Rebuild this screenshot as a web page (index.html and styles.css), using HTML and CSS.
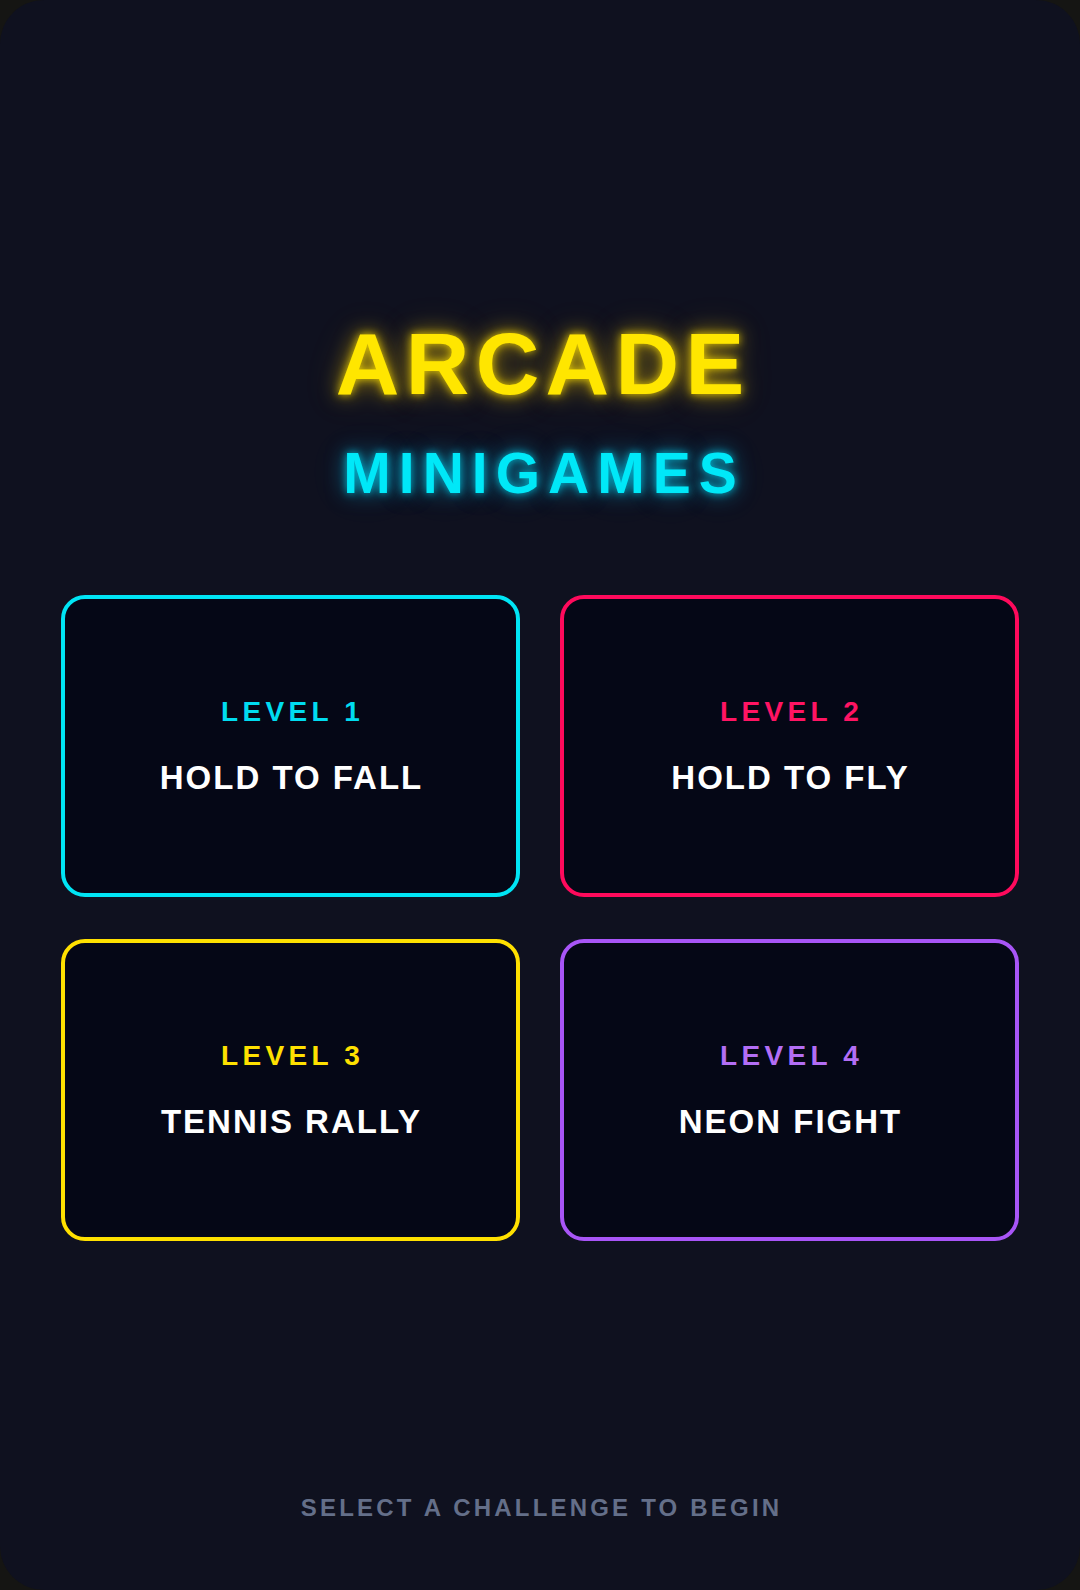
FILE: index.html
```html
<!DOCTYPE html>
<html lang="en">
<head>
<meta charset="utf-8">
<title>Arcade Minigames</title>
<link rel="stylesheet" href="styles.css">
</head>
<body>
  <main class="screen">
    <header class="brand">
      <h1 class="brand-title">ARCADE</h1>
      <h2 class="brand-sub">MINIGAMES</h2>
    </header>
    <section class="levels">
      <button class="level level-cyan">
        <span class="level-num">LEVEL 1</span>
        <span class="level-name">HOLD TO FALL</span>
      </button>
      <button class="level level-pink">
        <span class="level-num">LEVEL 2</span>
        <span class="level-name">HOLD TO FLY</span>
      </button>
      <button class="level level-yellow">
        <span class="level-num">LEVEL 3</span>
        <span class="level-name">TENNIS RALLY</span>
      </button>
      <button class="level level-purple">
        <span class="level-num">LEVEL 4</span>
        <span class="level-name">NEON FIGHT</span>
      </button>
    </section>
    <p class="hint">SELECT A CHALLENGE TO BEGIN</p>
  </main>
</body>
</html>
```
FILE: styles.css
```css
* { box-sizing: border-box; }

html, body {
  margin: 0;
  padding: 0;
  background: #151513;
}

body {
  font-family: "Liberation Sans", Arial, sans-serif;
}

.screen {
  width: 1080px;
  height: 1590px;
  background: #0f111f;
  border-radius: 44px;
  display: flex;
  flex-direction: column;
  align-items: stretch;
  padding: 320px 61px 70px;
}

.brand {
  display: flex;
  flex-direction: column;
  align-items: center;
}

.brand-title {
  margin: 0;
  font-size: 88px;
  line-height: 1;
  font-weight: 700;
  letter-spacing: 6.4px;
  margin-right: -6.4px;
  color: #ffe600;
  text-shadow: 0 0 8px rgba(255, 226, 0, 0.8), 0 0 20px rgba(255, 210, 0, 0.55), 0 0 36px rgba(255, 200, 0, 0.25);
}

.brand-sub {
  margin: 37px 0 0;
  font-size: 57px;
  line-height: 1;
  font-weight: 700;
  letter-spacing: 8px;
  margin-right: -8px;
  color: #00e8f8;
  text-shadow: 0 0 8px rgba(0, 230, 255, 0.75), 0 0 20px rgba(0, 200, 255, 0.5), 0 0 36px rgba(0, 190, 255, 0.2);
}

.levels {
  margin-top: 93px;
  display: grid;
  grid-template-columns: 1fr 1fr;
  grid-auto-rows: 302px;
  column-gap: 40px;
  row-gap: 42px;
}

.level {
  font-family: inherit;
  background: #050716;
  border: 4px solid;
  border-radius: 24px;
  display: flex;
  flex-direction: column;
  align-items: center;
  justify-content: center;
  padding: 0;
  cursor: pointer;
}

.level-num {
  font-size: 28px;
  line-height: 1;
  font-weight: 700;
  letter-spacing: 4.3px;
  margin-right: -4.3px;
}

.level-name {
  margin-top: 35px;
  font-size: 33px;
  line-height: 1;
  font-weight: 700;
  letter-spacing: 2px;
  margin-right: -2px;
  color: #ffffff;
}

.level-cyan { border-color: #00e5f5; }
.level-cyan .level-num { color: #00dcf0; }

.level-pink { border-color: #ff0a5c; }
.level-pink .level-num { color: #ff1463; }

.level-yellow { border-color: #ffe000; }
.level-yellow .level-num { color: #ffe000; }

.level-purple { border-color: #a855f7; }
.level-purple .level-num { color: #b36ef5; }

.hint {
  margin: auto 0 0;
  text-align: center;
  font-size: 24px;
  line-height: 1;
  font-weight: 700;
  letter-spacing: 3.2px;
  padding-left: 3.2px;
  color: #646f89;
}
```
